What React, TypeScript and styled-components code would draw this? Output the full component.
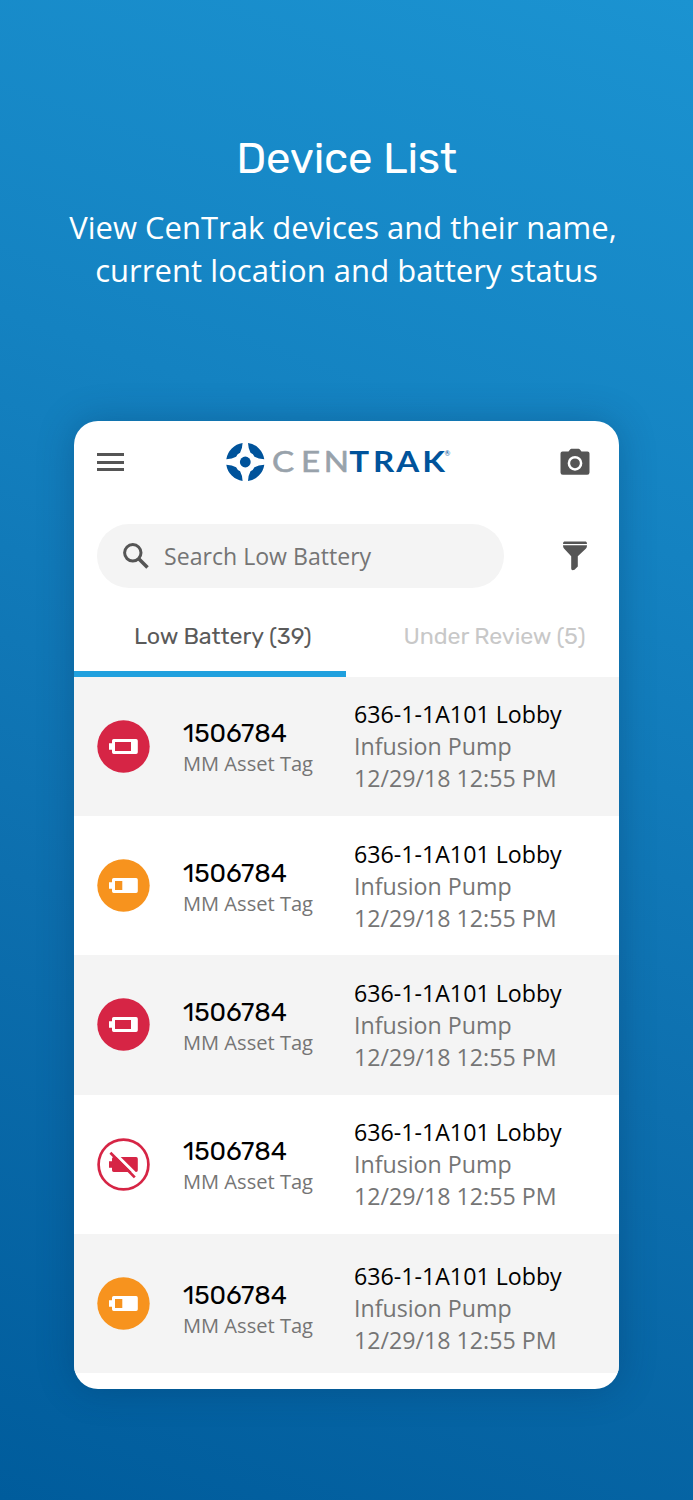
import React from 'react';
import styled, { createGlobalStyle } from 'styled-components';

const Global = createGlobalStyle`
  * { box-sizing: border-box; }
  body { margin: 0; }
`;

const display = `Rubik, Roboto, "Liberation Sans", sans-serif`;
const text = `"Open Sans", "Noto Sans", sans-serif`;

const Page = styled.main`
  width: 693px;
  height: 1500px;
  overflow: hidden;
  background: linear-gradient(200deg, #1b93d1 0%, #1482c1 32%, #0d6fae 64%, #005c9c 100%);
  display: flex;
  flex-direction: column;
  align-items: center;
  font-family: ${text};
`;

const Hero = styled.header`
  height: 421px;
  flex: none;
  padding-top: 131px;
  color: #fff;
  text-align: center;
`;

const Title = styled.h1`
  margin: 0;
  font: 400 43.8px/54px ${display};
  letter-spacing: -0.2px;
`;

const Subtitle = styled.p`
  margin: 21px 0 0;
  font-size: 31px;
  line-height: 42.5px;
  white-space: pre;
`;

const Line = styled.span<{ $track: number; $shift: number }>`
  display: block;
  letter-spacing: ${(p) => p.$track}px;
  padding-right: ${(p) => p.$shift}px;
`;

const Card = styled.section`
  width: 545px;
  height: 968px;
  flex: none;
  background: #fff;
  border-radius: 24px;
  overflow: hidden;
  box-shadow: 0 0 36px rgba(0, 40, 80, 0.28);
`;

const TopBar = styled.div`
  height: 82px;
  display: grid;
  grid-template-columns: 128px 1fr 59.5px;
  align-items: center;
  padding-left: 23px;
  svg { display: block; }
`;

const MenuButton = styled.button`
  border: 0;
  padding: 0;
  background: none;
  width: 27px;
  display: flex;
  flex-direction: column;
  gap: 4.3px;
`;

const MenuBar = styled.span`
  height: 3px;
  background: #555;
`;

const SearchRow = styled.div`
  height: 64px;
  margin-top: 21px;
  padding: 0 28px 0 23px;
  display: flex;
  align-items: center;
  justify-content: space-between;
`;

const SearchField = styled.div`
  width: 406.5px;
  height: 64px;
  border-radius: 32px;
  background: #f4f4f4;
  display: flex;
  align-items: center;
  padding: 0 0 1px 25px;
  gap: 14px;
  color: #757575;
  font-size: 23.1px;
`;

const Tabs = styled.div`
  height: 88.6px;
  display: flex;
`;

const Tab = styled.div<{ $active?: boolean }>`
  width: ${(p) => (p.$active ? 271.5 : 273.5)}px;
  padding: ${(p) => (p.$active ? '34px 0 0 60px' : '34px 0 0 58px')};
  border-bottom: ${(p) => (p.$active ? '6px solid #20a0de' : '0')};
  color: ${(p) => (p.$active ? '#5a5a5a' : '#c8c8c8')};
  font: 400 23.3px/29px ${display};
  letter-spacing: -0.1px;
  white-space: nowrap;
`;

const Row = styled.div<{ $shade: boolean }>`
  height: 139.35px;
  background: ${(p) => (p.$shade ? '#f4f4f4' : '#fff')};
  display: grid;
  grid-template-columns: 86px 171px 1fr;
  align-items: center;
  padding-left: 23px;
  svg { display: block; }
`;

const Cell = styled.div<{ $drop: number }>`
  padding-top: ${(p) => p.$drop * 2}px;
  white-space: nowrap;
`;

const DeviceId = styled.div`
  font: 400 26px/32px ${display};
  color: #000;
`;

const DeviceType = styled.div`
  font-size: 20.1px;
  line-height: 28px;
  color: #757575;
`;

const Detail = styled.div<{ $strong?: boolean }>`
  font-size: 23.2px;
  line-height: 32px;
  color: ${(p) => (p.$strong ? '#000' : '#757575')};
`;

type Level = 'critical' | 'low' | 'off';

function Battery({ level }: { level: Level }) {
  const color = level === 'low' ? '#f7931e' : '#d62545';
  const off = level === 'off';
  return (
    <svg width="53" height="53" viewBox="0 0 53 53">
      <circle cx="26.5" cy="26.5" r={off ? 24.9 : 26.2} fill={off ? '#fff' : color} stroke={off ? color : 'none'} strokeWidth="2.7" />
      <path
        d="M16.7 19h22.400a1.700 1.700 0 0 1 1.700 1.700v11.600a1.700 1.700 0 0 1-1.700 1.700H16.700a1.700 1.700 0 0 1-1.700-1.700v-2.500h-3v-6.500h3v-2.600a1.700 1.700 0 0 1 1.700-1.700z"
        fill={off ? color : '#fff'}
      />
      {level === 'critical' && <path d="M18 22h16v9H18z" fill={color} />}
      {level === 'low' && <path d="M18 22h7.300v9H18z" fill={color} />}
      {off && <path d="M15.800 13.400 41 38.200" stroke="#fff" strokeWidth="3" />}
      {off && <path d="M13.400 14.800 37.800 39.400" stroke={color} strokeWidth="2.700" />}
    </svg>
  );
}

function Logo() {
  return (
    <svg width="230" height="42" viewBox="0 0 230 42">
      <g fill="#00539b">
        {[0, 90, 180, 270].map((a) => (
          <path key={a} transform={`translate(20.300 21) rotate(${a})`} d="M-19 -2.700A19.200 19.200 0 0 1 -2.700 -19Q-3 -13 -5.200 -9.200Q-8 -8 -9.200 -5.200Q-13 -3 -19 -2.700Z" />
        ))}
        <circle cx="20.300" cy="21" r="5.400" />
      </g>
      <g fontFamily="Lato, sans-serif" fontSize="28.3" transform="scale(1.17 1)">
        <text x="40.200 65 84.400" y="30.600" fill="#98a2ab" stroke="#98a2ab" strokeWidth="0.600">CEN</text>
        <text x="106.300 126.500 146.400 168.500" y="30.600" fontWeight="700" fill="#00539b">TRAK</text>
      </g>
      <text x="219.500" y="15" fontFamily="Lato, sans-serif" fontSize="7" fill="#00539b">®</text>
    </svg>
  );
}

const levels: Level[] = ['critical', 'low', 'critical', 'off', 'low'];

export default function App() {
  return (
    <Page>
      <Global />
      <Hero>
        <Title>Device List</Title>
        <Subtitle>
          <Line $track={0} $shift={7}>View CenTrak devices and their name,</Line>
          <Line $track={0.05} $shift={0}>current location and battery status</Line>
        </Subtitle>
      </Hero>
      <Card>
        <TopBar>
          <MenuButton aria-label="Menu">
            <MenuBar />
            <MenuBar />
            <MenuBar />
          </MenuButton>
          <Logo />
          <svg width="30" height="28" viewBox="0 0 30 28">
            <path fill="#555" d="M2.500 3.500h6l1.600-2Q10.600.8 11.400.8h7.200q.8 0 1.300.7l1.600 2h6Q29.500 3.500 29.500 5.500v19q0 2.300-2.300 2.300H2.800Q.5 26.800.5 24.500v-19Q.5 3.500 2.500 3.500z" />
            <circle cx="15" cy="15.300" r="6.100" fill="none" stroke="#fff" strokeWidth="2.500" />
          </svg>
        </TopBar>
        <SearchRow>
          <SearchField>
            <svg width="28" height="28" viewBox="0 0 28 28" fill="none" stroke="#555">
              <circle cx="10.800" cy="10.800" r="8.200" strokeWidth="3" />
              <path d="M16.500 16.500 25.500 25.500" strokeWidth="3.600" />
            </svg>
            Search Low Battery
          </SearchField>
          <svg width="33" height="32" viewBox="0 0 33 32" fill="#555">
            <path d="M6.200 1.400h21.600q1.200 0 1.200 2.500H5q0-2.500 1.200-2.500zM5 5.300h24q0 2.200-1 3.200L19.800 16.300v10.200L16.500 29.800q-3.300 1.200-3.300-1.300V16.300L6 8.500q-1-1-1-3.200z" />
          </svg>
        </SearchRow>
        <Tabs>
          <Tab $active>Low Battery (39)</Tab>
          <Tab>Under Review (5)</Tab>
        </Tabs>
        {levels.map((level, i) => {
          const drop = i === 4 ? 4.3 : 0.2;
          return (
            <Row key={i} $shade={i % 2 === 0}>
              <Battery level={level} />
              <Cell $drop={drop + 1.8}>
                <DeviceId>1506784</DeviceId>
                <DeviceType>MM Asset Tag</DeviceType>
              </Cell>
              <Cell $drop={drop}>
                <Detail $strong>636-1-1A101 Lobby</Detail>
                <Detail>Infusion Pump</Detail>
                <Detail>12/29/18 12:55 PM</Detail>
              </Cell>
            </Row>
          );
        })}
      </Card>
    </Page>
  );
}
